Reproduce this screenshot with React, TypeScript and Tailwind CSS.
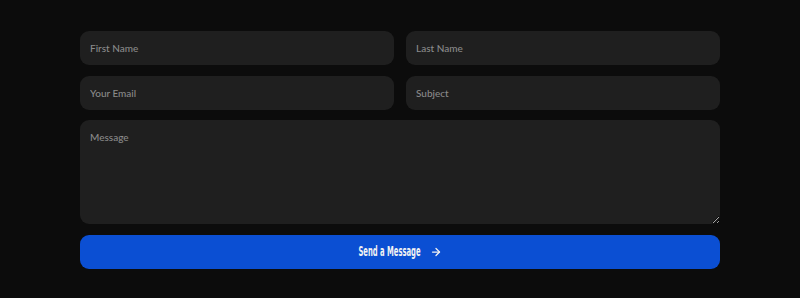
import { ArrowRight } from "lucide-react";

const fieldClass =
  "h-[34px] w-full rounded-[9px] bg-[#1f1f1f] px-[10px] text-[10px] font-medium text-[#d0d0d0] placeholder:text-[#8a8a8a] outline-none";

export default function App() {
  return (
    <div className="min-h-[298px] w-full bg-[#0c0c0c] px-[80px] pt-[31px] font-['Lato','Inter',sans-serif]">
      <form className="flex flex-col gap-[10.5px]" onSubmit={(e) => e.preventDefault()}>
        <div className="grid grid-cols-2 gap-[12px]">
          <input className={fieldClass} placeholder="First Name" />
          <input className={fieldClass} placeholder="Last Name" />
        </div>
        <div className="grid grid-cols-2 gap-[12px]">
          <input className={fieldClass} placeholder="Your Email" />
          <input className={fieldClass} placeholder="Subject" />
        </div>
        <textarea
          className="block h-[104px] w-full resize-y rounded-[9px] bg-[#1f1f1f] px-[10px] py-[10px] text-[10px] font-medium text-[#d0d0d0] placeholder:text-[#8a8a8a] outline-none"
          placeholder="Message"
        />
        <button
          type="submit"
          className="flex h-[34px] w-full items-center justify-center gap-[9px] rounded-[9px] bg-[#0b4fd3] text-[#f2f2f2]"
        >
          <span className="-mx-[26px] inline-block scale-x-[0.54] font-['DejaVu_Sans_Condensed','DejaVu_Sans',sans-serif] text-[14px] font-bold">
            Send a Message
          </span>
          <ArrowRight size={12} strokeWidth={2.5} />
        </button>
      </form>
    </div>
  );
}
